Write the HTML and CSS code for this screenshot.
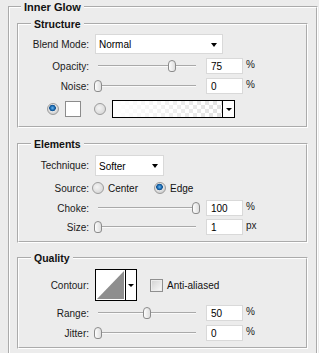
FILE: index.html
```html
<!DOCTYPE html>
<html lang="en">
<head>
    <meta charset="UTF-8">
    <title>Inner Glow</title>
    <link rel="stylesheet" href="styles.css">
</head>
<body>

<fieldset class="panel">
    <legend class="panel-title">Inner Glow</legend>

    <!-- Structure -->
    <fieldset class="group group-structure">
        <legend>Structure</legend>
        <div class="row row-select">
            <span class="label">Blend Mode:</span>
            <div class="select select-wide"><span>Normal</span><i class="arrow"></i></div>
        </div>
        <div class="row">
            <span class="label">Opacity:</span>
            <div class="slider"><span class="thumb" style="left: 75%"></span></div>
            <div class="num">75</div>
            <span class="unit">%</span>
        </div>
        <div class="row">
            <span class="label">Noise:</span>
            <div class="slider"><span class="thumb" style="left: 0%"></span></div>
            <div class="num">0</div>
            <span class="unit">%</span>
        </div>
        <div class="row row-colors">
            <span class="radio checked"></span>
            <span class="swatch"></span>
            <span class="radio"></span>
            <div class="gradient">
                <div class="gradient-fill"></div>
                <div class="gradient-btn"><i class="arrow small"></i></div>
            </div>
        </div>
    </fieldset>

    <!-- Elements -->
    <fieldset class="group group-elements">
        <legend>Elements</legend>
        <div class="row row-select">
            <span class="label">Technique:</span>
            <div class="select select-narrow"><span>Softer</span><i class="arrow"></i></div>
        </div>
        <div class="row row-source">
            <span class="label">Source:</span>
            <span class="radio radio-first"></span>
            <span class="option option-center">Center</span>
            <span class="radio checked"></span>
            <span class="option">Edge</span>
        </div>
        <div class="row">
            <span class="label">Choke:</span>
            <div class="slider"><span class="thumb" style="left: 100%"></span></div>
            <div class="num">100</div>
            <span class="unit">%</span>
        </div>
        <div class="row row-tight">
            <span class="label">Size:</span>
            <div class="slider"><span class="thumb" style="left: 0%"></span></div>
            <div class="num">1</div>
            <span class="unit">px</span>
        </div>
    </fieldset>

    <!-- Quality -->
    <fieldset class="group group-quality">
        <legend>Quality</legend>
        <div class="row row-contour">
            <span class="label">Contour:</span>
            <div class="contour">
                <svg class="contour-preview" width="29" height="30" viewBox="0 0 29 30">
                    <rect width="29" height="30" fill="#fff"/>
                    <polygon points="1,29 28,1 28,29" fill="#8e8e8e"/>
                </svg>
                <div class="contour-btn"><i class="arrow small"></i></div>
            </div>
            <span class="check"></span>
            <span class="option">Anti-aliased</span>
        </div>
        <div class="row">
            <span class="label">Range:</span>
            <div class="slider"><span class="thumb" style="left: 50%"></span></div>
            <div class="num">50</div>
            <span class="unit">%</span>
        </div>
        <div class="row">
            <span class="label">Jitter:</span>
            <div class="slider"><span class="thumb" style="left: 0%"></span></div>
            <div class="num">0</div>
            <span class="unit">%</span>
        </div>
    </fieldset>
</fieldset>

</body>
</html>
```

FILE: styles.css
```css
html {
    overflow: hidden;
}

body {
    margin: 0;
    background: #ececec;
    font-family: "Liberation Sans", Arial, sans-serif;
    font-size: 10px;
    color: #1a1a1a;
}

fieldset {
    margin: 0;
    min-width: 0;
    border: 2px groove #fff;
}

legend {
    font-weight: bold;
    line-height: 14px;
    padding: 0 3px;
    color: #111;
}

.panel {
    margin: 0 1px 0 8px;
    padding: 3px 8px 20px 7px;
}

.panel-title {
    font-size: 11px;
    margin-left: 4px;
}

.group {
    padding: 0;
}

.group legend {
    font-size: 10.5px;
    margin-left: 12px;
}

.group-structure {
    padding-bottom: 8px;
}

.group-elements {
    margin-top: 9px;
    padding-bottom: 6px;
}

.group-quality {
    margin-top: 8px;
    padding-bottom: 6px;
}

/* rows */
.row {
    display: flex;
    align-items: center;
    height: 16px;
    margin-top: 4px;
}

.row-select {
    height: 20px;
    margin-top: 3px;
}

.group-elements .row-select {
    height: 21px;
    margin-top: 4px;
}

.row-tight {
    margin-top: 3px;
}

.row-colors {
    height: 18px;
    margin-top: 6px;
    padding-left: 28px;
}

.row-contour {
    height: 32px;
    margin-top: 4px;
}

.label {
    width: 70px;
    margin-right: 6px;
    text-align: right;
}

/* dropdowns */
.select {
    box-sizing: border-box;
    height: 100%;
    background: #fff;
    border: 1px solid #d9d9d9;
    display: flex;
    align-items: center;
    justify-content: space-between;
    padding: 1px 5px 0 3px;
    color: #000;
}

.select-wide {
    width: 128px;
}

.select-narrow {
    width: 69px;
}

.arrow {
    display: block;
    width: 0;
    height: 0;
    border-left: 3.5px solid transparent;
    border-right: 3.5px solid transparent;
    border-top: 4px solid #000;
}

.arrow.small {
    border-left-width: 3px;
    border-right-width: 3px;
    border-top-width: 3px;
}

/* sliders */
.slider {
    position: relative;
    width: 98px;
    height: 16px;
    margin-left: 3px;
}

.slider::before {
    content: "";
    position: absolute;
    left: 0;
    right: 0;
    top: 7px;
    border-top: 1px solid #a9a9a9;
    border-bottom: 1px solid #fafafa;
}

.thumb {
    position: absolute;
    top: 2px;
    width: 8px;
    height: 12px;
    margin-left: -4px;
    box-sizing: border-box;
    border: 1px solid #8b8b8b;
    border-radius: 4px 4px 3px 3px;
    background: linear-gradient(to right, #fdfdfd, #dedede);
}

.num {
    box-sizing: border-box;
    width: 37px;
    height: 16px;
    margin-left: 10px;
    padding: 1px 0 0 4px;
    background: #fff;
    border: 1px solid #d9d9d9;
    line-height: 13px;
    color: #000;
}

.unit {
    align-self: flex-start;
    margin-left: 3px;
    line-height: 13px;
}

/* radios and checkbox */
.radio {
    box-sizing: border-box;
    width: 12px;
    height: 12px;
    border-radius: 50%;
    border: 1px solid #9c9c9c;
    background: radial-gradient(circle at 40% 40%, #f4f4f4, #cfcfcf);
    flex-shrink: 0;
}

.radio.checked {
    background: radial-gradient(circle at 45% 40%, #6fb6ee 0, #1d6fb5 2px, #0d4d8c 3px, #e6e6e6 3.6px, #cdcdcd 6px);
}

.swatch {
    box-sizing: border-box;
    width: 16px;
    height: 16px;
    margin: 0 13px 0 6px;
    background: #fff;
    border: 1px solid #8c8c8c;
}

.gradient {
    box-sizing: border-box;
    width: 123px;
    height: 18px;
    margin-left: 6px;
    border: 1px solid #000;
    display: flex;
}

.gradient-fill {
    flex: 1;
    background:
        linear-gradient(to right, #fff 0%, rgba(255, 255, 255, 0.3) 100%),
        linear-gradient(45deg, #d4d4d4 25%, transparent 25%, transparent 75%, #d4d4d4 75%),
        linear-gradient(45deg, #d4d4d4 25%, transparent 25%, transparent 75%, #d4d4d4 75%);
    background-color: #fff;
    background-size: 100% 100%, 8px 8px, 8px 8px;
    background-position: 0 0, 0 0, 4px 4px;
}

.gradient-btn {
    width: 11px;
    border-left: 1px solid #000;
    background: #fff;
    display: flex;
    justify-content: center;
    align-items: center;
}

.radio-first {
    margin-left: -3px;
}

.option {
    margin-left: 4px;
    color: #111;
}

.option-center {
    margin-right: 16px;
}

.contour {
    box-sizing: border-box;
    width: 42px;
    height: 32px;
    border: 1px solid #000;
    display: flex;
    background: #fff;
}

.contour-preview {
    display: block;
}

.contour-btn {
    flex: 1;
    border-left: 1px solid #000;
    display: flex;
    justify-content: center;
    align-items: center;
}

.check {
    box-sizing: border-box;
    width: 13px;
    height: 13px;
    margin-left: 13px;
    border: 1px solid #8f8f8f;
    background: linear-gradient(135deg, #d2d2d2, #fbfbfb);
    box-shadow: inset 0 0 0 1px #ededed;
}
```
